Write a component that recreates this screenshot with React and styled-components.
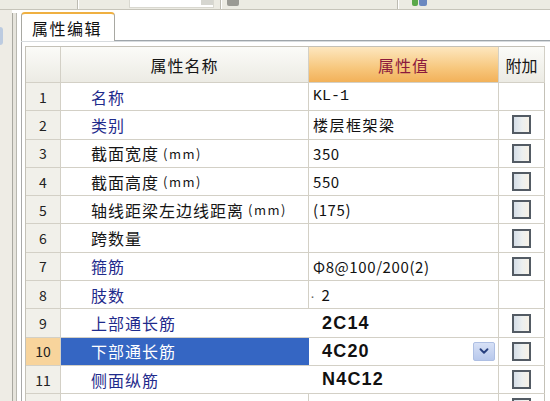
import React from 'react';
import styled, { createGlobalStyle } from 'styled-components';
import { ChevronDown } from 'lucide-react';

const GlobalStyle = createGlobalStyle`
  html, body { margin: 0; padding: 0; background: #ffffff; }
  body { font-family: "Noto Sans CJK SC", "Noto Sans", sans-serif; overflow: hidden; }
  * { box-sizing: border-box; }
`;

const Page = styled.div`
  width: 550px;
  height: 401px;
  display: flex;
  flex-direction: column;
  overflow: hidden;
  background: #ffffff;
`;

const TopBar = styled.div`
  height: 10px;
  flex: none;
  display: flex;
  background: #ecebe3;
  border-bottom: 1px solid #c6c4ba;
  overflow: hidden;
`;

const ToolGroup = styled.div`
  width: ${(p) => p.$w}px;
  flex: none;
  display: flex;
  align-items: flex-start;
  padding-left: ${(p) => p.$pad || 0}px;
  gap: 4px;
`;

const ToolSep = styled.div`
  width: 2px;
  flex: none;
  border-left: 1px solid #bdbbb2;
  border-right: 1px solid #ffffff;
`;

const ToolInput = styled.div`
  width: 85px;
  height: 8px;
  background: #ffffff;
  border: 1px solid #d9d8d0;
  border-top: none;
  display: flex;
  justify-content: flex-end;
`;

const ToolInputBtn = styled.div`
  width: 12px;
  height: 5px;
  background: #d6d6d0;
`;

const ToolIcon = styled.div`
  width: ${(p) => p.$w || 10}px;
  height: 6px;
  margin-left: ${(p) => p.$ml || 0}px;
  background: ${(p) => p.$c};
  border-radius: 0 0 2px 2px;
`;

const Body = styled.div`
  flex: 1;
  display: flex;
  min-height: 0;
`;

const LeftDock = styled.div`
  width: 12px;
  flex: none;
  background: #eeece5;
  display: flex;
  flex-direction: column;
`;

const DockMark = styled.div`
  width: 3px;
  height: 18px;
  margin-top: 17px;
  background: #bccbe0;
  border-radius: 0 3px 3px 0;
`;

const DockEdge = styled.div`
  width: 5px;
  flex: none;
  margin-top: 3px;
  background: #e6e4dc;
  border-left: 1px solid #a9a8a0;
  border-right: 1px solid #b9b8b0;
`;

const Main = styled.div`
  flex: 1;
  display: flex;
  flex-direction: column;
  padding-left: 4px;
  min-width: 0;
`;

const TabStrip = styled.div`
  height: 31px;
  flex: none;
  display: flex;
  align-items: flex-end;
  border-bottom: 1px solid #9ea5aa;
  box-shadow: 0 1px 0 #d7dbde;
  position: relative;
  z-index: 1;
`;

const Tab = styled.div`
  width: 94px;
  height: 29px;
  margin-bottom: -1px;
  background: #ffffff;
  border: 1px solid #a8a8a2;
  border-top: 2px solid #efb041;
  border-bottom: none;
  border-radius: 4px 4px 0 0;
  padding-left: 10px;
  display: flex;
  align-items: center;
  font-size: 16px;
  letter-spacing: 1.5px;
  color: #111111;
`;

const Panel = styled.div`
  flex: 1;
  border-left: 1px solid #a9a9a9;
  padding: 5px 0 0 3px;
  min-height: 0;
  overflow: hidden;
  background: #ffffff;
`;

const Table = styled.div`
  width: 520px;
  display: flex;
  flex-direction: column;
  border-left: 1px solid #c4c1b7;
  border-top: 1px solid #c4c1b7;
`;

const cols = '35px 248px 190px 46px';

const HeaderRow = styled.div`
  display: grid;
  grid-template-columns: ${cols};
  height: 36px;
  border-bottom: 1px solid #d3d0c6;
`;

const HeadCell = styled.div`
  display: flex;
  align-items: center;
  justify-content: center;
  border-right: 1px solid #d3d0c6;
  font-size: 16px;
  letter-spacing: ${(p) => (p.$tight ? 0 : 1)}px;
  color: ${(p) => (p.$accent ? '#8c1a3c' : '#151515')};
  background: ${(p) =>
    p.$accent
      ? 'linear-gradient(#fde7bf, #f7c77d 60%, #f2b159)'
      : 'linear-gradient(#fbfbf8, #ecebe4)'};
`;

const Row = styled.div`
  display: grid;
  grid-template-columns: ${cols};
  height: 28.3px;
  border-bottom: 1px solid #d3d0c6;
`;

const NumCell = styled.div`
  display: flex;
  align-items: center;
  justify-content: center;
  border-right: 1px solid #d3d0c6;
  background: ${(p) => (p.$selected ? '#f8d49c' : '#f1f0ea')};
  font-size: 14px;
  color: #222222;
`;

const NameCell = styled.div`
  display: flex;
  align-items: center;
  padding-left: 30px;
  border-right: 1px solid ${(p) => (p.$pasted ? 'transparent' : '#d3d0c6')};
  background: ${(p) => (p.$selected ? '#3566c3' : '#ffffff')};
  color: ${(p) => (p.$selected ? '#ffffff' : p.$blue ? '#1f2b8c' : '#151515')};
  font-size: 16px;
  letter-spacing: 1px;
  white-space: nowrap;
`;

const Unit = styled.span`
  font-size: 13px;
  letter-spacing: 1.5px;
  margin-left: 4px;
`;

const ValueCell = styled.div`
  display: flex;
  align-items: center;
  justify-content: space-between;
  padding-left: ${(p) => (p.$pasted ? 13 : 4)}px;
  padding-right: 3px;
  border-right: 1px solid #d3d0c6;
  background: #ffffff;
  white-space: nowrap;
`;

const ValueText = styled.span`
  font-family: ${(p) =>
    p.$mono
      ? '"Liberation Mono", monospace'
      : p.$pasted
      ? '"Liberation Sans", Arial, sans-serif'
      : '"Noto Sans CJK SC", "Noto Sans", sans-serif'};
  font-size: ${(p) => (p.$pasted ? 18 : 15)}px;
  font-weight: ${(p) => (p.$pasted ? 700 : 400)};
  letter-spacing: ${(p) => (p.$pasted ? 1.2 : p.$cjk ? 1.5 : p.$mono ? 0 : 0.6)}px;
  color: #111111;
`;

const Dot = styled.span`
  font-family: "Liberation Sans", Arial, sans-serif;
  margin-left: -3px;
  margin-right: 6px;
  color: #666666;
`;

const DropButton = styled.div`
  width: 22px;
  height: 19px;
  display: flex;
  align-items: center;
  justify-content: center;
  background: linear-gradient(#d7e1f6, #b8c8ec);
  border: 1px solid #aebfe3;
  border-radius: 2px;
  color: #28407f;
`;

const ExtraCell = styled.div`
  display: flex;
  align-items: center;
  justify-content: center;
  border-right: 1px solid #c4c1b7;
  background: #ffffff;
`;

const Check = styled.span`
  width: 19px;
  height: 19px;
  border: 2px solid #535b64;
  background: linear-gradient(90deg, #d5dee8, #edf0f0 55%, #f7f1e6);
`;

const rows = [
  { n: 1, name: '名称', blue: true, value: 'KL-1', mono: true, check: false },
  { n: 2, name: '类别', blue: true, value: '楼层框架梁', cjk: true, check: true },
  { n: 3, name: '截面宽度', unit: '(mm)', value: '350', check: true },
  { n: 4, name: '截面高度', unit: '(mm)', value: '550', check: true },
  { n: 5, name: '轴线距梁左边线距离', unit: '(mm)', value: '(175)', check: true },
  { n: 6, name: '跨数量', value: '', check: true },
  { n: 7, name: '箍筋', blue: true, value: 'Φ8@100/200(2)', check: true },
  { n: 8, name: '肢数', blue: true, value: '2', dot: true, check: false },
  { n: 9, name: '上部通长筋', blue: true, value: '2C14', pasted: true, check: true },
  { n: 10, name: '下部通长筋', blue: true, value: '4C20', pasted: true, selected: true, dropdown: true, check: true },
  { n: 11, name: '侧面纵筋', blue: true, value: 'N4C12', pasted: true, check: true },
  { n: 12, label: '', name: '', value: '', check: true },
];

export default function App() {
  return (
    <Page>
      <GlobalStyle />
      <TopBar>
        <ToolGroup $w={77} />
        <ToolSep />
        <ToolGroup $w={141} $pad={50}>
          <ToolInput>
            <ToolInputBtn />
          </ToolInput>
        </ToolGroup>
        <ToolSep />
        <ToolGroup $w={175} $pad={5}>
          <ToolIcon $w={12} $c="#9a9a94" />
        </ToolGroup>
        <ToolSep />
        <ToolGroup $w={140} $pad={13}>
          <ToolIcon $w={6} $c="#5aa84a" />
          <ToolIcon $w={8} $ml={-3} $c="#6b88c0" />
        </ToolGroup>
      </TopBar>
      <Body>
        <LeftDock>
          <DockMark />
        </LeftDock>
        <DockEdge />
        <Main>
          <TabStrip>
            <Tab>属性编辑</Tab>
          </TabStrip>
          <Panel>
            <Table>
              <HeaderRow>
                <HeadCell />
                <HeadCell>属性名称</HeadCell>
                <HeadCell $accent>属性值</HeadCell>
                <HeadCell $tight>附加</HeadCell>
              </HeaderRow>
              {rows.map((r) => (
                <Row key={r.n}>
                  <NumCell $selected={r.selected}>{r.label !== undefined ? r.label : r.n}</NumCell>
                  <NameCell $blue={r.blue} $selected={r.selected} $pasted={r.pasted}>
                    {r.name}
                    {r.unit && <Unit>{r.unit}</Unit>}
                  </NameCell>
                  <ValueCell $pasted={r.pasted}>
                    <ValueText $mono={r.mono} $pasted={r.pasted} $cjk={r.cjk}>
                      {r.dot && <Dot>·</Dot>}
                      {r.value}
                    </ValueText>
                    {r.dropdown && (
                      <DropButton>
                        <ChevronDown size={14} strokeWidth={3.2} />
                      </DropButton>
                    )}
                  </ValueCell>
                  <ExtraCell>{r.check && <Check />}</ExtraCell>
                </Row>
              ))}
            </Table>
          </Panel>
        </Main>
      </Body>
    </Page>
  );
}
